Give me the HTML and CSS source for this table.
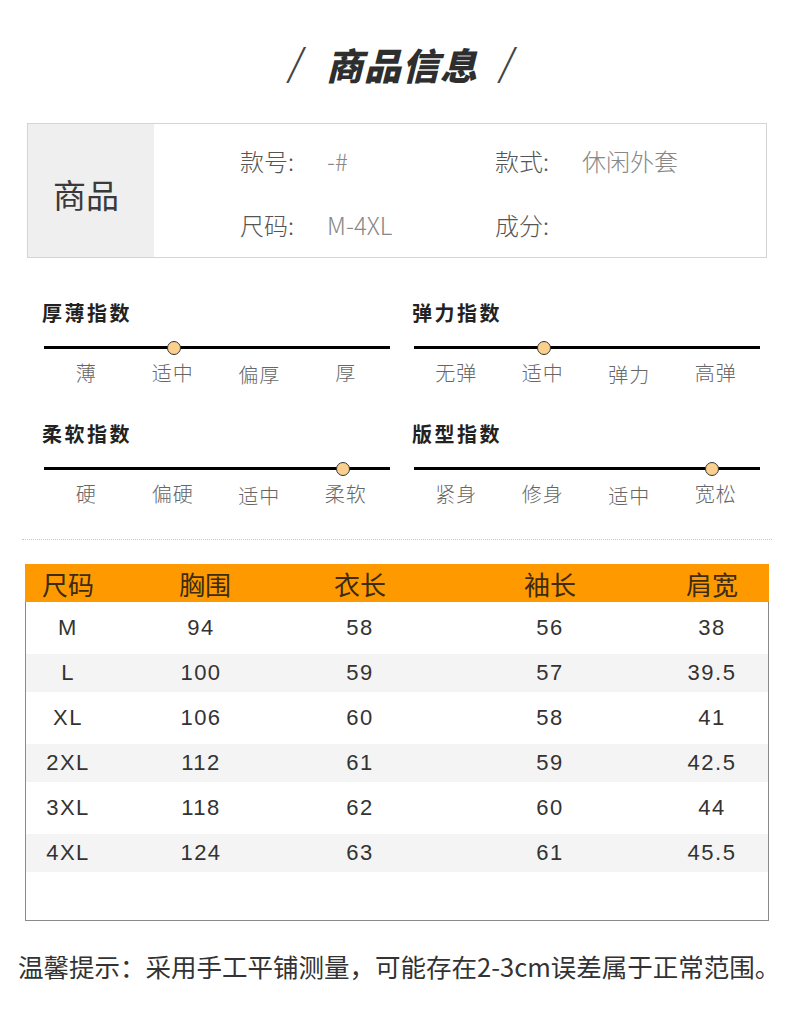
FILE: index.html
```html
<!DOCTYPE html>
<html lang="zh-CN">
<head>
<meta charset="utf-8">
<title>商品信息</title>
<link rel="stylesheet" href="styles.css">
</head>
<body>
<div class="page">
  <h1 class="title"><span class="slash">/</span><span class="title-text">商品信息</span><span class="slash">/</span></h1>

  <div class="product">
    <div class="product-head">商品</div>
    <div class="product-grid">
      <span class="lbl">款号:</span><span class="val">-#</span>
      <span class="lbl">款式:</span><span class="val">休闲外套</span>
      <span class="lbl">尺码:</span><span class="val">M-4XL</span>
      <span class="lbl">成分:</span><span class="val"></span>
    </div>
  </div>

  <div class="indices">
    <div class="index">
      <div class="index-title">厚薄指数</div>
      <div class="track"><span class="dot" style="left: 37.5%"></span></div>
      <div class="scale"><span>薄</span><span>适中</span><span class="low">偏厚</span><span>厚</span></div>
    </div>
    <div class="index">
      <div class="index-title">弹力指数</div>
      <div class="track"><span class="dot" style="left: 37.6%"></span></div>
      <div class="scale"><span>无弹</span><span>适中</span><span class="low">弹力</span><span>高弹</span></div>
    </div>
    <div class="index">
      <div class="index-title">柔软指数</div>
      <div class="track"><span class="dot" style="left: 86.4%"></span></div>
      <div class="scale"><span>硬</span><span>偏硬</span><span class="low">适中</span><span>柔软</span></div>
    </div>
    <div class="index">
      <div class="index-title">版型指数</div>
      <div class="track"><span class="dot" style="left: 86.1%"></span></div>
      <div class="scale"><span>紧身</span><span>修身</span><span class="low">适中</span><span>宽松</span></div>
    </div>
  </div>

  <div class="divider"></div>

  <div class="size-table">
    <div class="row head"><span>尺码</span><span>胸围</span><span>衣长</span><span>袖长</span><span>肩宽</span></div>
    <div class="row tall"><span>M</span><span>94</span><span>58</span><span>56</span><span>38</span></div>
    <div class="row alt"><span>L</span><span>100</span><span>59</span><span>57</span><span>39.5</span></div>
    <div class="row tall"><span>XL</span><span>106</span><span>60</span><span>58</span><span>41</span></div>
    <div class="row alt"><span>2XL</span><span>112</span><span>61</span><span>59</span><span>42.5</span></div>
    <div class="row tall"><span>3XL</span><span>118</span><span>62</span><span>60</span><span>44</span></div>
    <div class="row alt"><span>4XL</span><span>124</span><span>63</span><span>61</span><span>45.5</span></div>
    <div class="table-pad"></div>
  </div>

  <p class="note">温馨提示：采用手工平铺测量，可能存在2-3cm误差属于正常范围。</p>
</div>
</body>
</html>
```

FILE: styles.css
```css
* { box-sizing: border-box; }
html, body { margin: 0; padding: 0; background: #fff; }
body {
  font-family: "Noto Sans CJK SC", "Noto Sans", sans-serif;
  color: #333;
}
.page { width: 790px; }

.title {
  margin: 0;
  height: 123px;
  display: flex;
  align-items: center;
  justify-content: center;
  gap: 22px;
  padding-left: 14px;
  padding-top: 4px;
}
.slash {
  font-family: "DejaVu Sans", sans-serif;
  font-weight: 200;
  font-size: 44px;
  color: #444;
  transform: skewX(-10deg);
}
.title-text {
  font-size: 37px;
  font-weight: 900;
  font-style: italic;
  color: #2e2e2e;
  letter-spacing: 1px;
}

.product {
  margin-left: 27px;
  width: 740px;
  height: 135px;
  border: 1px solid #d4d4d4;
  display: flex;
}
.product-head {
  width: 126px;
  background: #efefef;
  display: flex;
  align-items: center;
  justify-content: center;
  font-size: 33px;
  color: #3a3a3a;
  padding: 6px 10px 0 0;
}
.product-grid {
  flex: 1;
  display: grid;
  grid-template-columns: 87px 168px 87px 1fr;
  grid-auto-rows: 64px;
  align-items: center;
  padding-left: 86px;
  padding-top: 4px;
  font-weight: 300;
}
.lbl { font-size: 24px; color: #555; }
.val { font-size: 24px; color: #888; }

.indices {
  margin-top: 42px;
  padding-left: 42px;
  display: grid;
  grid-template-columns: 370px 370px;
  row-gap: 36px;
}
.index-title {
  font-size: 20px;
  line-height: 26px;
  font-weight: 700;
  letter-spacing: 2.5px;
  color: #222;
}
.track {
  position: relative;
  margin: 15px 0 0 2px;
  width: 346px;
  height: 14px;
}
.track::before {
  content: "";
  position: absolute;
  left: 0;
  right: 0;
  top: 5px;
  height: 3px;
  background: #000;
}
.dot {
  position: absolute;
  top: 0;
  width: 14px;
  height: 14px;
  margin-left: -7px;
  border-radius: 50%;
  background: #fbd08f;
  border: 1px solid #333;
}
.scale {
  margin: 6px 0 0 1px;
  width: 346px;
  display: grid;
  grid-template-columns: repeat(4, 1fr);
  text-align: center;
  font-size: 20px;
  line-height: 24px;
  font-weight: 300;
  color: #666;
  letter-spacing: 1px;
}
.scale .low { position: relative; top: 2px; }

.divider {
  margin: 33px 0 0 22px;
  width: 750px;
  border-top: 1px dotted #c8c8c8;
}

.size-table {
  margin: 24px 0 0 25px;
  width: 744px;
  border-left: 1px solid #8a8a8a;
  border-right: 1px solid #8a8a8a;
  border-bottom: 1px solid #8a8a8a;
}
.row {
  display: grid;
  grid-template-columns: 84px 182px 136px 244px 80px 1fr;
  align-items: center;
  text-align: center;
  font-family: "Liberation Sans", "Noto Sans CJK SC", sans-serif;
  font-size: 22px;
  letter-spacing: 1.5px;
  color: #333;
}
.row.head {
  height: 38px;
  background: #fe9a00;
  margin: 0 -1px;
  padding: 0 1px;
  font-family: "Noto Sans CJK SC", sans-serif;
  font-size: 26px;
  letter-spacing: 0;
  color: #3d2b12;
}
.row.head span:nth-child(2) { padding-left: 8px; }
.row.tall { height: 52px; }
.row.alt { height: 38px; background: #f4f4f4; }
.table-pad { height: 48px; }

.note {
  margin: 30px 0 0 18px;
  width: max-content;
  font-size: 25.5px;
  line-height: 30px;
  color: #333;
  white-space: nowrap;
}
```
